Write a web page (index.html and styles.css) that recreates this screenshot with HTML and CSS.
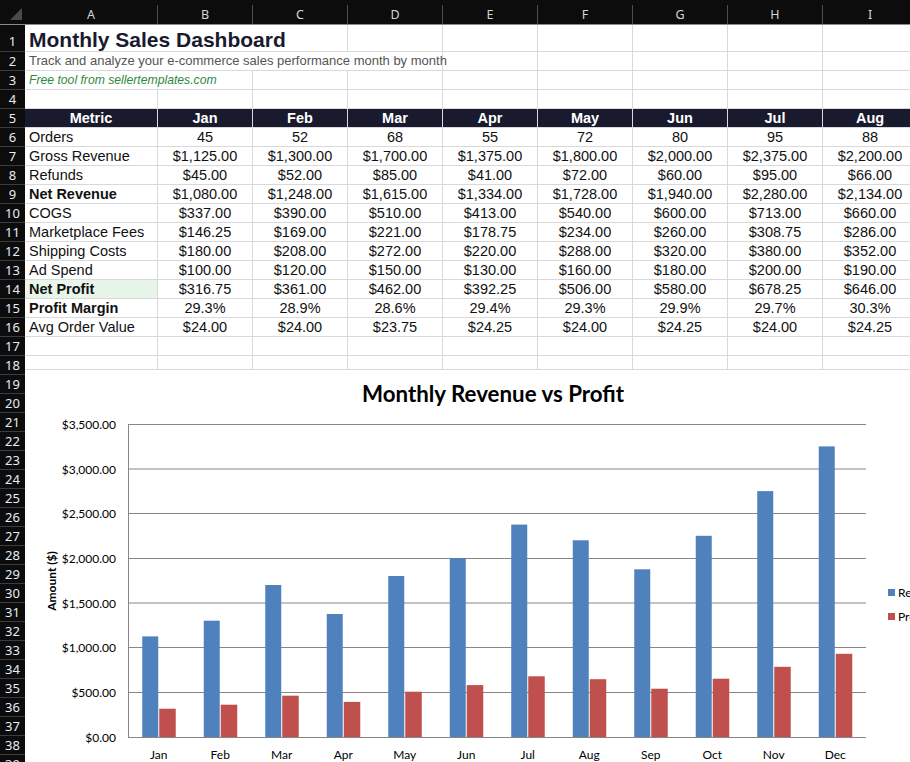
FILE: index.html
```html
<!DOCTYPE html>
<html>
<head>
<meta charset="utf-8">
<link rel="stylesheet" href="styles.css">
</head>
<body>
<div class="sheet">
  <div class="colhead">
    <div class="corner"><span class="tri"></span></div>
    <div class="col a">A</div>
    <div class="col">B</div>
    <div class="col">C</div>
    <div class="col">D</div>
    <div class="col">E</div>
    <div class="col">F</div>
    <div class="col">G</div>
    <div class="col">H</div>
    <div class="col">I</div>
  </div>

  <div class="row r1">
    <div class="rn">1</div>
    <div class="c a span3 title">Monthly Sales Dashboard</div>
    <div class="c"></div><div class="c"></div><div class="c"></div><div class="c"></div><div class="c"></div><div class="c"></div>
  </div>
  <div class="row">
    <div class="rn">2</div>
    <div class="c a span4 sub">Track and analyze your e-commerce sales performance month by month</div>
    <div class="c"></div><div class="c"></div><div class="c"></div><div class="c"></div><div class="c"></div>
  </div>
  <div class="row">
    <div class="rn">3</div>
    <div class="c a span2 free">Free tool from sellertemplates.com</div>
    <div class="c"></div><div class="c"></div><div class="c"></div><div class="c"></div><div class="c"></div><div class="c"></div><div class="c"></div>
  </div>
  <div class="row">
    <div class="rn">4</div>
    <div class="c a"></div><div class="c"></div><div class="c"></div><div class="c"></div><div class="c"></div><div class="c"></div><div class="c"></div><div class="c"></div><div class="c"></div>
  </div>
  <div class="row hdr">
    <div class="rn">5</div>
    <div class="c a">Metric</div><div class="c">Jan</div><div class="c">Feb</div><div class="c">Mar</div><div class="c">Apr</div><div class="c">May</div><div class="c">Jun</div><div class="c">Jul</div><div class="c">Aug</div>
  </div>
  <div class="row">
    <div class="rn">6</div>
    <div class="c a">Orders</div><div class="c">45</div><div class="c">52</div><div class="c">68</div><div class="c">55</div><div class="c">72</div><div class="c">80</div><div class="c">95</div><div class="c">88</div>
  </div>
  <div class="row">
    <div class="rn">7</div>
    <div class="c a">Gross Revenue</div><div class="c">$1,125.00</div><div class="c">$1,300.00</div><div class="c">$1,700.00</div><div class="c">$1,375.00</div><div class="c">$1,800.00</div><div class="c">$2,000.00</div><div class="c">$2,375.00</div><div class="c">$2,200.00</div>
  </div>
  <div class="row">
    <div class="rn">8</div>
    <div class="c a">Refunds</div><div class="c">$45.00</div><div class="c">$52.00</div><div class="c">$85.00</div><div class="c">$41.00</div><div class="c">$72.00</div><div class="c">$60.00</div><div class="c">$95.00</div><div class="c">$66.00</div>
  </div>
  <div class="row">
    <div class="rn">9</div>
    <div class="c a b">Net Revenue</div><div class="c">$1,080.00</div><div class="c">$1,248.00</div><div class="c">$1,615.00</div><div class="c">$1,334.00</div><div class="c">$1,728.00</div><div class="c">$1,940.00</div><div class="c">$2,280.00</div><div class="c">$2,134.00</div>
  </div>
  <div class="row">
    <div class="rn">10</div>
    <div class="c a">COGS</div><div class="c">$337.00</div><div class="c">$390.00</div><div class="c">$510.00</div><div class="c">$413.00</div><div class="c">$540.00</div><div class="c">$600.00</div><div class="c">$713.00</div><div class="c">$660.00</div>
  </div>
  <div class="row">
    <div class="rn">11</div>
    <div class="c a">Marketplace Fees</div><div class="c">$146.25</div><div class="c">$169.00</div><div class="c">$221.00</div><div class="c">$178.75</div><div class="c">$234.00</div><div class="c">$260.00</div><div class="c">$308.75</div><div class="c">$286.00</div>
  </div>
  <div class="row">
    <div class="rn">12</div>
    <div class="c a">Shipping Costs</div><div class="c">$180.00</div><div class="c">$208.00</div><div class="c">$272.00</div><div class="c">$220.00</div><div class="c">$288.00</div><div class="c">$320.00</div><div class="c">$380.00</div><div class="c">$352.00</div>
  </div>
  <div class="row">
    <div class="rn">13</div>
    <div class="c a">Ad Spend</div><div class="c">$100.00</div><div class="c">$120.00</div><div class="c">$150.00</div><div class="c">$130.00</div><div class="c">$160.00</div><div class="c">$180.00</div><div class="c">$200.00</div><div class="c">$190.00</div>
  </div>
  <div class="row">
    <div class="rn">14</div>
    <div class="c a b green">Net Profit</div><div class="c">$316.75</div><div class="c">$361.00</div><div class="c">$462.00</div><div class="c">$392.25</div><div class="c">$506.00</div><div class="c">$580.00</div><div class="c">$678.25</div><div class="c">$646.00</div>
  </div>
  <div class="row">
    <div class="rn">15</div>
    <div class="c a b">Profit Margin</div><div class="c">29.3%</div><div class="c">28.9%</div><div class="c">28.6%</div><div class="c">29.4%</div><div class="c">29.3%</div><div class="c">29.9%</div><div class="c">29.7%</div><div class="c">30.3%</div>
  </div>
  <div class="row">
    <div class="rn">16</div>
    <div class="c a">Avg Order Value</div><div class="c">$24.00</div><div class="c">$24.00</div><div class="c">$23.75</div><div class="c">$24.25</div><div class="c">$24.00</div><div class="c">$24.25</div><div class="c">$24.00</div><div class="c">$24.25</div>
  </div>
  <div class="row"><div class="rn">17</div><div class="c a"></div><div class="c"></div><div class="c"></div><div class="c"></div><div class="c"></div><div class="c"></div><div class="c"></div><div class="c"></div><div class="c"></div></div>
  <div class="row"><div class="rn">18</div><div class="c a"></div><div class="c"></div><div class="c"></div><div class="c"></div><div class="c"></div><div class="c"></div><div class="c"></div><div class="c"></div><div class="c"></div></div>
  <div class="row"><div class="rn">19</div></div>
  <div class="row"><div class="rn">20</div></div>
  <div class="row"><div class="rn">21</div></div>
  <div class="row"><div class="rn">22</div></div>
  <div class="row"><div class="rn">23</div></div>
  <div class="row"><div class="rn">24</div></div>
  <div class="row"><div class="rn">25</div></div>
  <div class="row"><div class="rn">26</div></div>
  <div class="row"><div class="rn">27</div></div>
  <div class="row"><div class="rn">28</div></div>
  <div class="row"><div class="rn">29</div></div>
  <div class="row"><div class="rn">30</div></div>
  <div class="row"><div class="rn">31</div></div>
  <div class="row"><div class="rn">32</div></div>
  <div class="row"><div class="rn">33</div></div>
  <div class="row"><div class="rn">34</div></div>
  <div class="row"><div class="rn">35</div></div>
  <div class="row"><div class="rn">36</div></div>
  <div class="row"><div class="rn">37</div></div>
  <div class="row"><div class="rn">38</div></div>
  <div class="row"><div class="rn">39</div></div>

  <svg class="chart" width="885" height="393" viewBox="25 369 885 393" xmlns="http://www.w3.org/2000/svg">
    <rect x="25" y="369" width="885" height="393" fill="#ffffff"/>
    <line x1="25" y1="369.5" x2="910" y2="369.5" stroke="#d9d9d9"/>
    <text class="ctitle" x="493" y="401.5" text-anchor="middle" textLength="262" lengthAdjust="spacingAndGlyphs">Monthly Revenue vs Profit</text>

    <g stroke="#868686" stroke-width="1">
      <line x1="128" y1="424.5" x2="866" y2="424.5"/>
      <line x1="128" y1="469" x2="866" y2="469"/>
      <line x1="128" y1="513.5" x2="866" y2="513.5"/>
      <line x1="128" y1="558.5" x2="866" y2="558.5"/>
      <line x1="128" y1="603" x2="866" y2="603"/>
      <line x1="128" y1="647.5" x2="866" y2="647.5"/>
      <line x1="128" y1="692.5" x2="866" y2="692.5"/>
    </g>

    <g class="ylab" text-anchor="end">
      <text x="116" y="429">$3,500.00</text>
      <text x="116" y="473.5">$3,000.00</text>
      <text x="116" y="518">$2,500.00</text>
      <text x="116" y="563">$2,000.00</text>
      <text x="116" y="607.5">$1,500.00</text>
      <text x="116" y="652">$1,000.00</text>
      <text x="116" y="697">$500.00</text>
      <text x="116" y="741.5">$0.00</text>
    </g>

    <text class="atitle" transform="translate(55.5 581) rotate(-90)" text-anchor="middle">Amount ($)</text>

    <g fill="#4f81bd">
      <rect x="142.25" y="636.4" width="16" height="100.6"/>
      <rect x="203.75" y="620.7" width="16" height="116.3"/>
      <rect x="265.25" y="585.0" width="16" height="152.0"/>
      <rect x="326.75" y="614.0" width="16" height="123.0"/>
      <rect x="388.25" y="576.0" width="16" height="161.0"/>
      <rect x="449.75" y="558.1" width="16" height="178.9"/>
      <rect x="511.25" y="524.6" width="16" height="212.4"/>
      <rect x="572.75" y="540.3" width="16" height="196.7"/>
      <rect x="634.25" y="569.3" width="16" height="167.7"/>
      <rect x="695.75" y="535.8" width="16" height="201.2"/>
      <rect x="757.25" y="491.1" width="16" height="245.9"/>
      <rect x="818.75" y="446.4" width="16" height="290.6"/>
    </g>
    <g fill="#c0504d">
      <rect x="159.25" y="708.7" width="16.5" height="28.3"/>
      <rect x="220.75" y="704.7" width="16.5" height="32.3"/>
      <rect x="282.25" y="695.7" width="16.5" height="41.3"/>
      <rect x="343.75" y="701.9" width="16.5" height="35.1"/>
      <rect x="405.25" y="691.7" width="16.5" height="45.3"/>
      <rect x="466.75" y="685.1" width="16.5" height="51.9"/>
      <rect x="528.25" y="676.3" width="16.5" height="60.7"/>
      <rect x="589.75" y="679.2" width="16.5" height="57.8"/>
      <rect x="651.25" y="688.7" width="16.5" height="48.3"/>
      <rect x="712.75" y="678.7" width="16.5" height="58.3"/>
      <rect x="774.25" y="666.8" width="16.5" height="70.2"/>
      <rect x="835.75" y="653.8" width="16.5" height="83.2"/>
    </g>

    <g stroke="#868686" stroke-width="1">
      <line x1="128.5" y1="424" x2="128.5" y2="737.5"/>
      <line x1="128" y1="737.5" x2="866" y2="737.5"/>
    </g>

    <g class="xlab" text-anchor="middle">
      <text x="158.75" y="758.5">Jan</text>
      <text x="220.25" y="758.5">Feb</text>
      <text x="281.75" y="758.5">Mar</text>
      <text x="343.25" y="758.5">Apr</text>
      <text x="404.75" y="758.5">May</text>
      <text x="466.25" y="758.5">Jun</text>
      <text x="527.75" y="758.5">Jul</text>
      <text x="589.25" y="758.5">Aug</text>
      <text x="650.75" y="758.5">Sep</text>
      <text x="712.25" y="758.5">Oct</text>
      <text x="773.75" y="758.5">Nov</text>
      <text x="835.25" y="758.5">Dec</text>
    </g>

    <rect x="888" y="589" width="7" height="7" fill="#4f81bd"/>
    <text class="leg" x="898" y="597">Revenue</text>
    <rect x="888" y="613" width="7" height="7" fill="#c0504d"/>
    <text class="leg" x="898" y="621">Profit</text>
  </svg>
</div>
</body>
</html>
```

FILE: styles.css
```css
html, body {
  margin: 0;
  padding: 0;
  background: #ffffff;
  overflow: hidden;
}
body {
  font-family: "Liberation Sans", Arial, sans-serif;
  color: #111111;
}
.sheet {
  position: relative;
  width: 910px;
  height: 762px;
  overflow: hidden;
}
.colhead {
  display: flex;
  align-items: flex-end;
  height: 25px;
  box-sizing: border-box;
  background: #0c0c0c;
  border-bottom: 1px solid #8a8a8a;
}
.corner {
  flex: none;
  width: 25px;
  height: 24px;
  display: flex;
  justify-content: flex-end;
  align-items: flex-end;
  box-sizing: border-box;
  padding: 0 3px 4px 0;
}
.tri {
  width: 0;
  height: 0;
  border-left: 12px solid transparent;
  border-bottom: 12px solid #4a4a4a;
}
.col {
  flex: none;
  width: 95px;
  height: 19px;
  box-sizing: border-box;
  border-right: 1px solid #4d4d4d;
  color: #d6d6d6;
  font-family: "Noto Sans", "Open Sans", sans-serif;
  font-size: 12.5px;
  line-height: 19px;
  text-align: center;
}
.col.a { width: 133px; }

.row {
  display: flex;
  height: 19px;
}
.row.r1 { height: 27px; }
.rn {
  flex: none;
  width: 25px;
  box-sizing: border-box;
  background: #0c0c0c;
  border-bottom: 1px solid #3c3c3c;
  color: #e4ecf4;
  font-family: "Noto Sans", "Open Sans", sans-serif;
  font-size: 13px;
  line-height: 18px;
  text-align: center;
}
.r1 .rn {
  line-height: 20px;
  padding-top: 6px;
}
.c {
  flex: none;
  width: 95px;
  box-sizing: border-box;
  border-right: 1px solid #d9d9d9;
  border-bottom: 1px solid #d9d9d9;
  font-size: 14.5px;
  line-height: 18px;
  text-align: center;
  white-space: nowrap;
  overflow: hidden;
}
.c.a {
  width: 133px;
  text-align: left;
  padding-left: 4px;
}
.c.span2 { width: 228px; overflow: visible; }
.c.span3 { width: 323px; overflow: visible; }
.c.span4 { width: 418px; overflow: visible; }
.b { font-weight: bold; }
.green { background: #e8f5e9; }

.title {
  font-size: 21px;
  font-weight: bold;
  color: #1a1a2e;
  line-height: 24px;
  padding-top: 3px;
}
.sub {
  font-size: 13px;
  color: #555555;
}
.free {
  font-size: 12.2px;
  font-style: italic;
  color: #2b8a3e;
}
.hdr .c {
  background: #1a1a2e;
  color: #ffffff;
  font-weight: bold;
  text-align: center;
  padding-left: 0;
}

.chart {
  position: absolute;
  left: 25px;
  top: 369px;
  display: block;
}
.chart text {
  font-family: Lato, "Open Sans", sans-serif;
  fill: #000000;
}
.ctitle {
  font-size: 23px;
  font-weight: bold;
}
.ylab text, .xlab text, .leg {
  font-size: 12px;
}
.atitle {
  font-size: 12px;
  font-weight: bold;
}
```
